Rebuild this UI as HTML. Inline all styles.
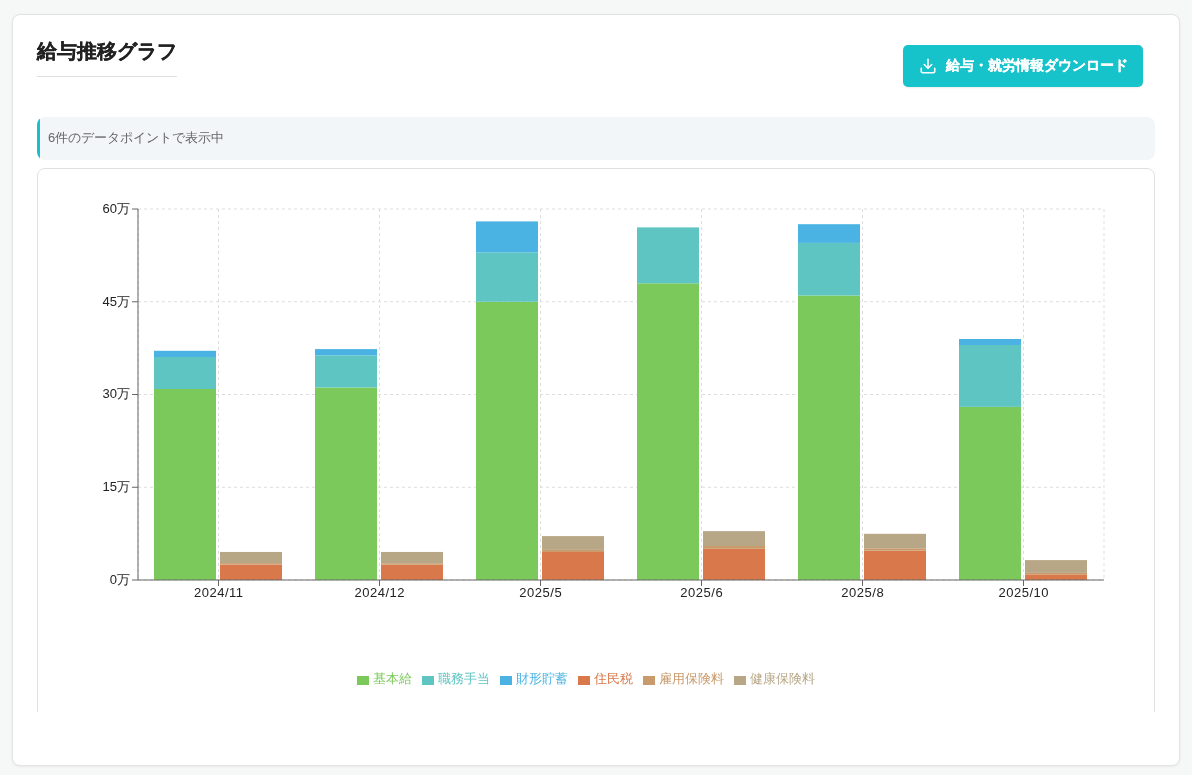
<!DOCTYPE html>
<html lang="ja"><head><meta charset="utf-8">
<style>
body{will-change:transform;}
html,body{margin:0;padding:0;width:1192px;height:775px;overflow:hidden;background:#f6f8f8;font-family:"Liberation Sans",sans-serif;}
.card{position:absolute;left:12px;top:14px;width:1166px;height:750px;background:#fff;border:1px solid #e3e3e3;border-radius:8px;box-shadow:0 1px 3px rgba(0,0,0,0.06);}
.title{position:absolute;left:37px;top:37px;width:140px;height:39px;border-bottom:1px solid #e0e0e0;font-size:20px;font-weight:bold;color:#222;-webkit-text-stroke:0.25px #222;line-height:28px;white-space:nowrap;}
.btn{position:absolute;left:903px;top:45px;width:240px;height:42px;background:#17c3cb;border-radius:5px;box-shadow:0 1px 2px rgba(0,0,0,0.08);color:#fff;font-size:14px;font-weight:bold;-webkit-text-stroke:0.15px #fff;white-space:nowrap;}

.btn span{position:absolute;left:42.5px;top:11px;line-height:18px;}
.info{position:absolute;left:37px;top:117px;width:1118px;height:43px;background:#f3f6f9;border-radius:8px;overflow:hidden;}
.info b{position:absolute;left:0;top:0;width:3px;height:43px;background:#17c1c9;}
.info span{position:absolute;left:11px;top:13px;font-size:13px;color:#666;line-height:16px;white-space:nowrap;}
.clip{position:absolute;left:0;top:0;width:1192px;height:712px;overflow:hidden;}
.chartbox{position:absolute;left:37px;top:168px;width:1116px;height:700px;border:1px solid #e0e0e0;border-radius:8px;background:#fff;}
svg.chart{position:absolute;left:0;top:0;}
.tk{font-size:13px;fill:#222;}
.tx{letter-spacing:0.5px;}
.legend{position:absolute;left:78px;top:667.5px;width:1026px;text-align:center;font-size:13px;line-height:24px;white-space:nowrap;}
.li{display:inline-block;margin-right:10px;}
.li i{display:inline-block;width:12px;height:9px;margin-right:4px;vertical-align:middle;}
</style></head><body>
<div class="card"></div>
<div class="title">給与推移グラフ</div>
<div class="btn"><svg width="18" height="18" viewBox="0 0 24 24" fill="none" stroke="#fff" stroke-width="2.1" stroke-linecap="round" stroke-linejoin="round" style="position:absolute;left:16.2px;top:11.8px"><path d="M21 15v4a2 2 0 0 1-2 2H5a2 2 0 0 1-2-2v-4"/><polyline points="7 10 12 15 17 10"/><line x1="12" y1="15" x2="12" y2="3"/></svg><span>給与・就労情報ダウンロード</span></div>
<div class="info"><b></b><span>6件のデータポイントで表示中</span></div>
<div class="clip">
<div class="chartbox"></div>
<svg class="chart" width="1192" height="712" viewBox="0 0 1192 712" style="font-family:'Liberation Sans',sans-serif">
<line x1="138" y1="580.0" x2="1104" y2="580.0" stroke="#ddd" stroke-dasharray="3 3"/>
<line x1="138" y1="487.25" x2="1104" y2="487.25" stroke="#ddd" stroke-dasharray="3 3"/>
<line x1="138" y1="394.5" x2="1104" y2="394.5" stroke="#ddd" stroke-dasharray="3 3"/>
<line x1="138" y1="301.75" x2="1104" y2="301.75" stroke="#ddd" stroke-dasharray="3 3"/>
<line x1="138" y1="209.0" x2="1104" y2="209.0" stroke="#ddd" stroke-dasharray="3 3"/>
<line x1="138" y1="209" x2="138" y2="580" stroke="#ddd" stroke-dasharray="3 3"/>
<line x1="218.5" y1="209" x2="218.5" y2="580" stroke="#ddd" stroke-dasharray="3 3"/>
<line x1="379.5" y1="209" x2="379.5" y2="580" stroke="#ddd" stroke-dasharray="3 3"/>
<line x1="540.5" y1="209" x2="540.5" y2="580" stroke="#ddd" stroke-dasharray="3 3"/>
<line x1="701.5" y1="209" x2="701.5" y2="580" stroke="#ddd" stroke-dasharray="3 3"/>
<line x1="862.5" y1="209" x2="862.5" y2="580" stroke="#ddd" stroke-dasharray="3 3"/>
<line x1="1023.5" y1="209" x2="1023.5" y2="580" stroke="#ddd" stroke-dasharray="3 3"/>
<line x1="1104" y1="209" x2="1104" y2="580" stroke="#ddd" stroke-dasharray="3 3"/>
<rect x="154.00" y="389" width="62.00" height="191.00" fill="#7bc95b"/>
<rect x="154.00" y="357" width="62.00" height="32.00" fill="#5fc5c3"/>
<rect x="154.00" y="350.8" width="62.00" height="6.20" fill="#4ab3e3"/>
<rect x="220.00" y="564.6" width="62.00" height="15.40" fill="#d9784b"/>
<rect x="220.00" y="563.1" width="62.00" height="1.50" fill="#c99a6c"/>
<rect x="220.00" y="551.95" width="62.00" height="11.15" fill="#b8a787"/>
<rect x="315.00" y="387.5" width="62.00" height="192.50" fill="#7bc95b"/>
<rect x="315.00" y="355.4" width="62.00" height="32.10" fill="#5fc5c3"/>
<rect x="315.00" y="349.1" width="62.00" height="6.30" fill="#4ab3e3"/>
<rect x="381.00" y="564.7" width="62.00" height="15.30" fill="#d9784b"/>
<rect x="381.00" y="563.2" width="62.00" height="1.50" fill="#c99a6c"/>
<rect x="381.00" y="551.95" width="62.00" height="11.25" fill="#b8a787"/>
<rect x="476.00" y="301.75" width="62.00" height="278.25" fill="#7bc95b"/>
<rect x="476.00" y="252.3" width="62.00" height="49.45" fill="#5fc5c3"/>
<rect x="476.00" y="221.4" width="62.00" height="30.90" fill="#4ab3e3"/>
<rect x="542.00" y="551.96" width="62.00" height="28.04" fill="#d9784b"/>
<rect x="542.00" y="549.9" width="62.00" height="2.06" fill="#c99a6c"/>
<rect x="542.00" y="536.1" width="62.00" height="13.80" fill="#b8a787"/>
<rect x="637.00" y="283.3" width="62.00" height="296.70" fill="#7bc95b"/>
<rect x="637.00" y="227.4" width="62.00" height="55.90" fill="#5fc5c3"/>
<rect x="703.00" y="548.8" width="62.00" height="31.20" fill="#d9784b"/>
<rect x="703.00" y="546" width="62.00" height="2.80" fill="#c99a6c"/>
<rect x="703.00" y="531.15" width="62.00" height="14.85" fill="#b8a787"/>
<rect x="798.00" y="295.5" width="62.00" height="284.50" fill="#7bc95b"/>
<rect x="798.00" y="242.9" width="62.00" height="52.60" fill="#5fc5c3"/>
<rect x="798.00" y="224.2" width="62.00" height="18.70" fill="#4ab3e3"/>
<rect x="864.00" y="550.6" width="62.00" height="29.40" fill="#d9784b"/>
<rect x="864.00" y="548.3" width="62.00" height="2.30" fill="#c99a6c"/>
<rect x="864.00" y="533.8" width="62.00" height="14.50" fill="#b8a787"/>
<rect x="959.00" y="406.9" width="62.00" height="173.10" fill="#7bc95b"/>
<rect x="959.00" y="345" width="62.00" height="61.90" fill="#5fc5c3"/>
<rect x="959.00" y="339" width="62.00" height="6.00" fill="#4ab3e3"/>
<rect x="1025.00" y="574.4" width="62.00" height="5.60" fill="#d9784b"/>
<rect x="1025.00" y="572.9" width="62.00" height="1.50" fill="#c99a6c"/>
<rect x="1025.00" y="560.1" width="62.00" height="12.80" fill="#b8a787"/>
<line x1="138" y1="209" x2="138" y2="580" stroke="#666"/>
<line x1="138" y1="580" x2="1104" y2="580" stroke="#666"/>
<line x1="132" y1="580.0" x2="138" y2="580.0" stroke="#666"/>
<text x="130" y="580.0" dy="0.3em" text-anchor="end" class="tk">0万</text>
<line x1="132" y1="487.25" x2="138" y2="487.25" stroke="#666"/>
<text x="130" y="487.25" dy="0.3em" text-anchor="end" class="tk">15万</text>
<line x1="132" y1="394.5" x2="138" y2="394.5" stroke="#666"/>
<text x="130" y="394.5" dy="0.3em" text-anchor="end" class="tk">30万</text>
<line x1="132" y1="301.75" x2="138" y2="301.75" stroke="#666"/>
<text x="130" y="301.75" dy="0.3em" text-anchor="end" class="tk">45万</text>
<line x1="132" y1="209.0" x2="138" y2="209.0" stroke="#666"/>
<text x="130" y="209.0" dy="0.3em" text-anchor="end" class="tk">60万</text>
<line x1="218.5" y1="580" x2="218.5" y2="586" stroke="#666"/>
<text x="218.75" y="588" dy="0.71em" text-anchor="middle" class="tk tx">2024/11</text>
<line x1="379.5" y1="580" x2="379.5" y2="586" stroke="#666"/>
<text x="379.75" y="588" dy="0.71em" text-anchor="middle" class="tk tx">2024/12</text>
<line x1="540.5" y1="580" x2="540.5" y2="586" stroke="#666"/>
<text x="540.75" y="588" dy="0.71em" text-anchor="middle" class="tk tx">2025/5</text>
<line x1="701.5" y1="580" x2="701.5" y2="586" stroke="#666"/>
<text x="701.75" y="588" dy="0.71em" text-anchor="middle" class="tk tx">2025/6</text>
<line x1="862.5" y1="580" x2="862.5" y2="586" stroke="#666"/>
<text x="862.75" y="588" dy="0.71em" text-anchor="middle" class="tk tx">2025/8</text>
<line x1="1023.5" y1="580" x2="1023.5" y2="586" stroke="#666"/>
<text x="1023.75" y="588" dy="0.71em" text-anchor="middle" class="tk tx">2025/10</text>
</svg>
<div class="legend"><span class="li"><i style="background:#7bc95b"></i><span style="color:#7bc95b;position:relative;top:-0.5px">基本給</span></span><span class="li"><i style="background:#5fc5c3"></i><span style="color:#5fc5c3;position:relative;top:-0.5px">職務手当</span></span><span class="li"><i style="background:#4ab3e3"></i><span style="color:#4ab3e3;position:relative;top:-0.5px">財形貯蓄</span></span><span class="li"><i style="background:#d9784b"></i><span style="color:#d9784b;position:relative;top:-0.5px">住民税</span></span><span class="li"><i style="background:#c99a6c"></i><span style="color:#c99a6c;position:relative;top:-0.5px">雇用保険料</span></span><span class="li"><i style="background:#b8a787"></i><span style="color:#b8a787;position:relative;top:-0.5px">健康保険料</span></span></div>
</div>
</body></html>
